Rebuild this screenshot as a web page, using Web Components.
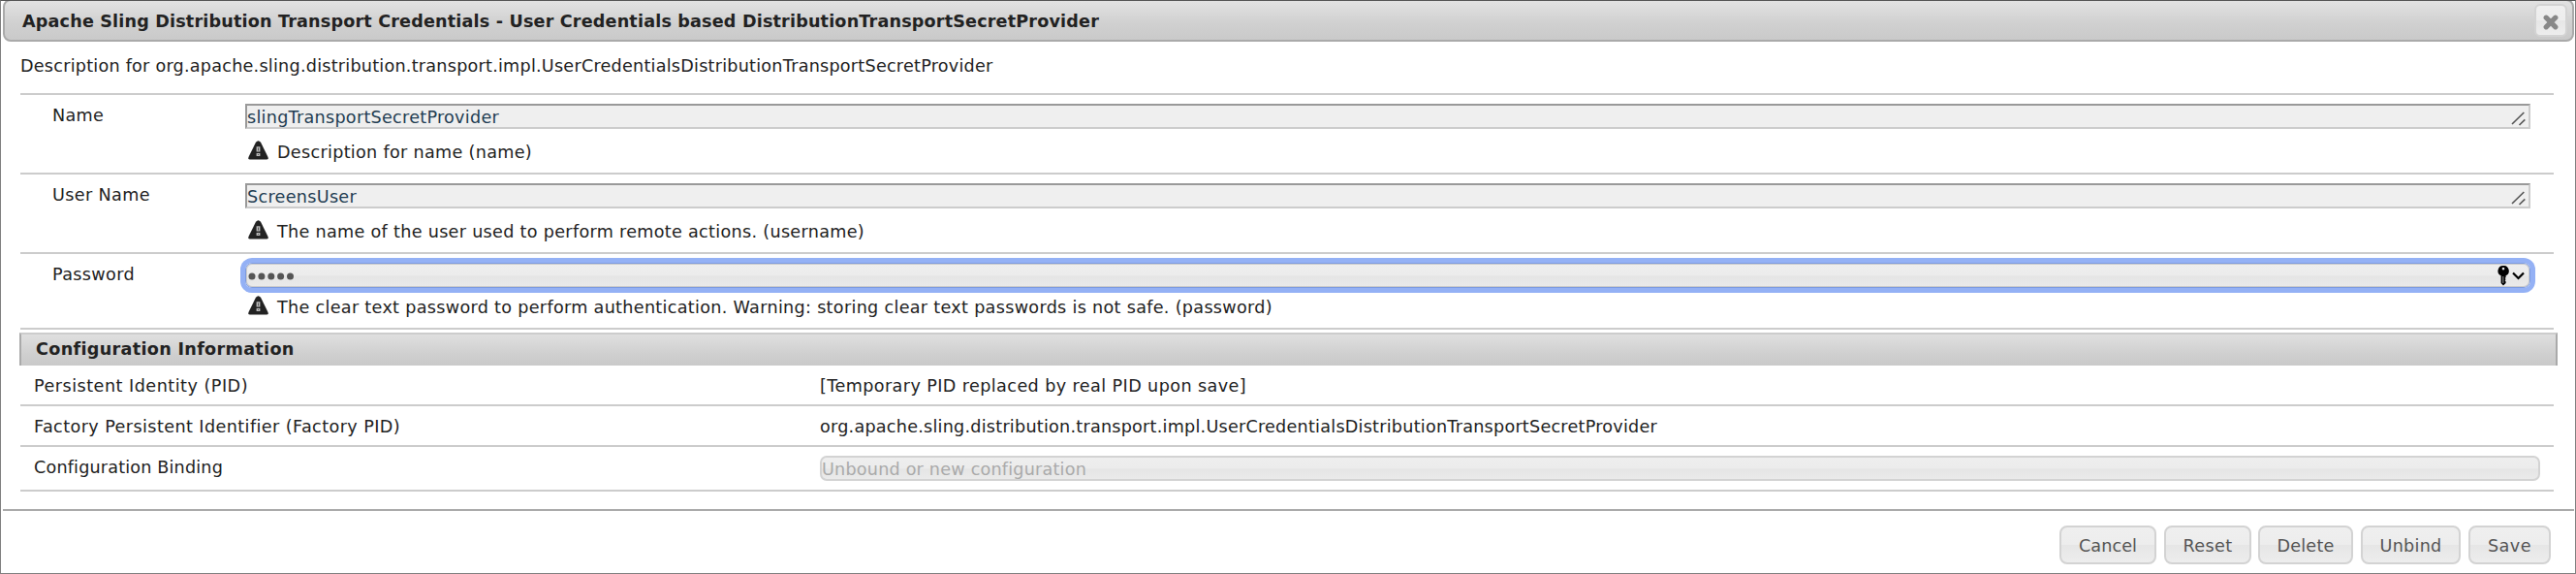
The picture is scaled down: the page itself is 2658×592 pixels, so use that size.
<!DOCTYPE html>
<html lang="en">
<head>
<meta charset="utf-8">
<title>Apache Sling Distribution Transport Credentials</title>
<style>
body{margin:0;background:#fff;font:17.6px/22px "DejaVu Sans",Verdana,sans-serif;color:#222}
</style>
</head>
<body>
<config-dialog>
  <dialog-title slot="title"><text-run w="1111">Apache Sling Distribution Transport Credentials - User Credentials based DistributionTransportSecretProvider</text-run></dialog-title>
  <text-run slot="intro" w="1003.5">Description for org.apache.sling.distribution.transport.impl.UserCredentialsDistributionTransportSecretProvider</text-run>
  <prop-row>
    <text-run slot="label" w="53">Name</text-run>
    <text-area><text-run w="260">slingTransportSecretProvider</text-run></text-area>
    <text-run slot="hint" w="263">Description for name (name)</text-run>
  </prop-row>
  <prop-row>
    <text-run slot="label" w="101">User Name</text-run>
    <text-area><text-run w="113">ScreensUser</text-run></text-area>
    <text-run slot="hint" w="606">The name of the user used to perform remote actions. (username)</text-run>
  </prop-row>
  <prop-row class="last">
    <text-run slot="label" w="85">Password</text-run>
    <password-field></password-field>
    <text-run slot="hint" w="1027">The clear text password to perform authentication. Warning: storing clear text passwords is not safe. (password)</text-run>
  </prop-row>
  <section-head><text-run w="266">Configuration Information</text-run></section-head>
  <info-row><text-run slot="key" w="221">Persistent Identity (PID)</text-run><text-run w="440">[Temporary PID replaced by real PID upon save]</text-run></info-row>
  <info-row><text-run slot="key" w="378">Factory Persistent Identifier (Factory PID)</text-run><text-run w="864">org.apache.sling.distribution.transport.impl.UserCredentialsDistributionTransportSecretProvider</text-run></info-row>
  <info-row class="tall"><text-run slot="key" w="195">Configuration Binding</text-run><disabled-select><text-run w="273">Unbound or new configuration</text-run></disabled-select></info-row>
  <ui-button slot="actions" style="width:100px"><text-run w="60">Cancel</text-run></ui-button>
  <ui-button slot="actions" style="width:90px;margin-left:8px"><text-run w="51">Reset</text-run></ui-button>
  <ui-button slot="actions" style="width:98px;margin-left:7px"><text-run w="59">Delete</text-run></ui-button>
  <ui-button slot="actions" style="width:103px;margin-left:8px"><text-run w="64">Unbind</text-run></ui-button>
  <ui-button slot="actions" style="width:85px;margin-left:8px"><text-run w="45">Save</text-run></ui-button>
</config-dialog>
<script>
const define = (name, html) => {
  const tpl = document.createElement('template');
  tpl.innerHTML = html;
  customElements.define(name, class extends HTMLElement {
    constructor() {
      super();
      this.attachShadow({mode: 'open'}).appendChild(tpl.content.cloneNode(true));
    }
  });
};

define('config-dialog', `<style>
:host{display:flex;flex-direction:column;box-sizing:border-box;width:2658px;height:592px;border:1px solid #808080;border-top-color:#555;overflow:hidden}
.body{flex:none;height:482px;margin:0 22px 0 20px}
.intro{box-sizing:border-box;height:53px;padding-top:14px}
footer{margin:0 1px 0 2px;border-top:2px solid #aaa;display:flex;justify-content:flex-end;padding:15px 24px 0 0}
</style><slot name="title"></slot><div class="body"><div class="intro"><slot name="intro"></slot></div><slot></slot></div><footer><slot name="actions"></slot></footer>`);

define('dialog-title', `<style>
:host{flex:none;display:flex;justify-content:space-between;box-sizing:border-box;height:44px;margin:-2px 1px 0 2px;border:2px solid #aaa;border-radius:8px;background:linear-gradient(#e2e2e2,#d0d0d0 58%,#cacaca);font-weight:bold;padding:10px 5px 0 18px}
button{display:flex;justify-content:center;align-items:flex-start;box-sizing:border-box;width:34px;height:34px;margin:-7px 0 0;padding:9px 0 0;border:2px solid #d3d3d3;border-radius:6px;background:linear-gradient(#efefef,#ededed 49%,#e6e6e6 51%,#ededed)}
svg{display:block;flex:none}
</style><slot></slot><button aria-label="close"><svg width="16" height="16" viewBox="0 0 16 16"><path d="M3.2 3.2 12.8 12.8M12.8 3.2 3.2 12.8" stroke="#888" stroke-width="5.2" stroke-linecap="round"/></svg></button>`);

define('prop-row', `<style>
:host{display:grid;grid-template-columns:232px 2358px;box-sizing:border-box;height:82px;border-top:2px solid #ccc}
:host(.last){height:80px;border-bottom:2px solid #ccc}
.label{padding:10px 0 0 33px}
.value{padding-top:9px}
.hint{display:flex;margin-top:13px}
:host(.last) .hint{margin-top:9px}
svg{margin:-1px 9px 0 3px;flex:none}
</style><div class="label"><slot name="label"></slot></div><div class="value"><slot></slot><div class="hint"><svg width="21" height="20" viewBox="0 0 21 20"><path d="M8 1.8Q10.5-1.2 13 1.8L20.4 16.8Q21.4 19.6 19 19.6H2Q-.4 19.6.6 16.8Z" fill="#222"/><path d="M8.6 6.2h3.8v5.4H8.6zM8.6 13h3.8v3H8.6z" fill="#bbb"/><path d="M10 7.4h1v3.2h-1zM10 14h1v1h-1z" fill="#555"/></svg><slot name="hint"></slot></div></div>`);

define('text-area', `<style>
:host{display:flex;justify-content:space-between;box-sizing:border-box;height:26px;border:2px solid;border-color:#999 #ccc #ccc #999;background:#efefef;color:#1f3d52;padding-top:1px}
svg{flex:none;margin:5px 3px 0 0}
</style><slot></slot><svg width="15" height="15" viewBox="0 0 15 15"><path d="M1 13 13.3 1M8.5 14 14.3 8.4" stroke="#555" stroke-width="1.6"/></svg>`);

define('password-field', `<style>
:host{display:flex;justify-content:space-between;box-sizing:border-box;height:26px;border:1px solid #7d9be0;border-radius:7px;box-shadow:0 0 0 5px #94b1f5,inset 0 0 0 1px #ccc;background:linear-gradient(#eee,#ececec 48%,#e5e5e5 54%,#eaeaea)}
.dots{margin:9px 0 0 2px}.icons{margin:2px 4px 0 0}
svg{display:block}
</style><svg class="dots" width="50" height="8" viewBox="0 0 50 8" fill="#555"><circle cx="4" cy="4" r="3.5"/><circle cx="13.9" cy="4" r="3.5"/><circle cx="23.8" cy="4" r="3.5"/><circle cx="33.6" cy="4" r="3.5"/><circle cx="43.5" cy="4" r="3.5"/></svg><svg class="icons" width="29" height="21" viewBox="0 0 29 21"><path fill-rule="evenodd" d="M6 0a5.4 5.4 0 0 1 2.6 10.3V12l-.9 1 .9 1-.9 1.2.9 1.2V18L6 20.5 3.6 18V10.3A5.4 5.4 0 0 1 6 0ZM6 1.8a1.3 1.3 0 1 0 .01 0Z"/><path d="M5.8 11v7" stroke="#aaa" stroke-width=".9"/><path d="M16 7.5 21.5 13 27 7.5" fill="none" stroke="#000" stroke-width="2.2"/></svg>`);

define('section-head', `<style>
:host{display:block;box-sizing:border-box;height:34px;margin:3px -4px 0 -1px;border:solid #aaa;border-width:2px 2px 0;border-top-color:#ccc;background:linear-gradient(#dfdfdf,#d0d0d0 60%,#c9c9c9);font-weight:bold;padding:4px 0 0 15px}
</style><slot></slot>`);

define('info-row', `<style>
:host{display:grid;grid-template-columns:811px 1775px;box-sizing:border-box;height:42px;padding:9px 0 0 14px;border-bottom:2px solid #ccc}
:host(.tall){height:46px}
.key{padding-top:1px}
::slotted(text-run:not([slot])){margin-top:1px}
</style><div class="key"><slot name="key"></slot></div><div><slot></slot></div>`);

define('disabled-select', `<style>
:host{display:flow-root;box-sizing:border-box;height:26px;border:2px solid #d3d3d3;border-radius:7px;background:linear-gradient(#eee,#ececec 48%,#e5e5e5 54%,#eaeaea);color:#aaa;padding-top:1px}
</style><slot></slot>`);

define('ui-button', `<style>
:host{display:flex;justify-content:center;box-sizing:border-box;height:40px;padding-top:8px;border:2px solid #d3d3d3;border-radius:8px;background:linear-gradient(#efefef,#ededed 49%,#e6e6e6 51%,#ededed);color:#555}
</style><slot></slot>`);

/* A single line of text whose tracking is adjusted so that it takes w pixels. */
customElements.define('text-run', class extends HTMLElement {
  connectedCallback() {
    if (!this.shadowRoot) this.attachShadow({mode: 'open'}).innerHTML =
      '<style>:host{display:block;width:max-content;white-space:nowrap;height:22px}</style><slot></slot>';
    const n = this.textContent.length;
    const own = this.getBoundingClientRect().width;
    this.style.letterSpacing = ((this.getAttribute('w') - own) / n).toFixed(4) + 'px';
  }
});
</script>
</body>
</html>
